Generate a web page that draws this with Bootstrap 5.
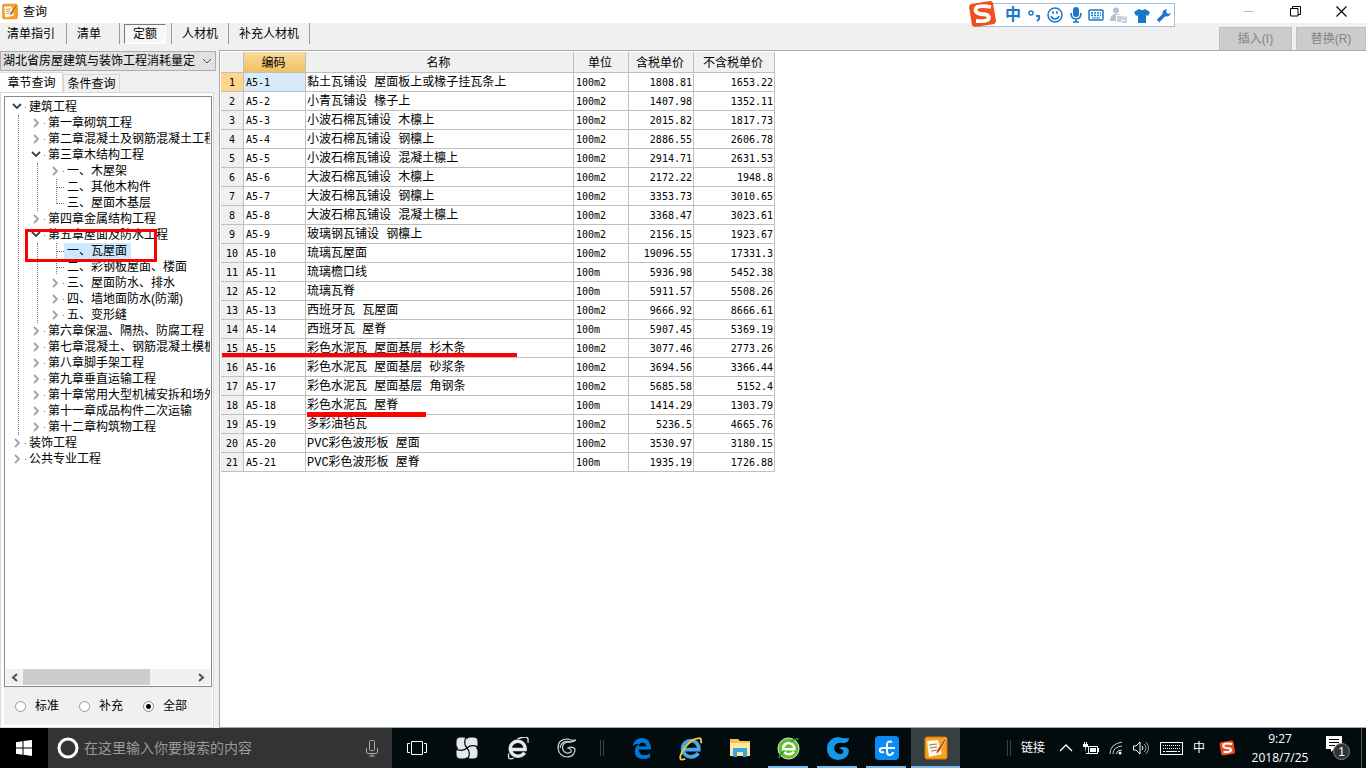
<!DOCTYPE html>
<html lang="zh-CN">
<head>
<meta charset="utf-8">
<meta name="viewport" content="width=device-width, initial-scale=1">
<title>查询</title>
<link href="https://cdn.jsdelivr.net/npm/bootstrap@5.3.0/dist/css/bootstrap.min.css" rel="stylesheet">
<style>
  :root { --face: #f0f0f0; --line: #a9a9b1; --grid: #c0c0c0; }
  body { font: 12px/16px "Liberation Sans", "Noto Sans CJK SC", sans-serif; color: #000; background: var(--face); overflow: hidden; }
  button, input, select { font: inherit; color: inherit; }
  button { border: 0; background: none; padding: 0; white-space: nowrap; }
  svg { display: block; flex: none; }
  ul { list-style: none; margin: 0; padding: 0; }

  .titlebar { height: 23px; background: #fff; padding-left: 2px; gap: 5px; }
  .win-btns { margin-right: 2px; }
  .win-btn { width: 46px; height: 23px; }
  .ime { right: 191px; top: 3px; height: 24px; width: 198px; border: 1px solid #a5bdd8; background: #fff; z-index: 5; padding-left: 24px; color: #1b78c8; }
  .ime-logo { left: -10px; top: -4px; }
  .ime-zh { font-size: 16px; font-weight: 700; line-height: 20px; }

  .toolbar { height: 27px; }
  .tool { height: 21px; padding: 1px 10px 0; line-height: 20px; border-right: 1px solid #999; }
  .tool-first { padding-left: 7px; padding-right: 11px; }
  .tool-wide { padding-right: 18px; }
  .pressed-cell { border-right: 1px solid #999; padding: 1px 5px 0 4px; height: 21px; }
  .pressed { width: 42px; height: 20px; border: 1px solid #fff; border-top-color: #777; border-left-color: #777; background: #f8f8f8; line-height: 19px; }
  .action { height: 24px; border: 1px solid #bfbfbf; background: #ccc; color: #838383; }
  .insert { width: 73px; }
  .replace { width: 70px; }

  .side { width: 219px; padding-top: 1px; }
  .quota { width: 216px; height: 20px; border: 1px solid #adadad; background: #e1e1e1; border-radius: 0; padding: 0 20px 0 2px; appearance: none; }
  .combo-arrow { right: 7px; top: 7px; pointer-events: none; }
  .tabs { margin-top: 1px; height: 20px; }
  .tab { border: 1px solid #d9d9d9; border-bottom: 0; height: 18px; width: 57px; line-height: 18px; background: var(--face); }
  .tab.active { width: 63px; height: 20px; background: #fff; border-left-color: #fff; }
  .pane { width: 214px; border: 1px solid #d9d9d9; background: #fff; padding: 3px 1px 2px 3px; }
  .tree { border: 1px solid #828790; background: #fff; padding: 2px 1px 1px; }
  .tree-view { overflow: hidden; white-space: nowrap; }
  .node { height: 16px; padding-left: 5px; }
  .node svg { width: 18px; height: 16px; }
  .node a { color: #000; text-decoration: none; line-height: 16px; }
  .node a.chosen { background: #cce8ff; padding: 0 4px 0 3px; margin-left: -3px; }
  .kids { margin-left: 12px; border-left: 1px dotted #777; padding-left: 6px; }
  .mark-box { left: -19px; top: -14px; width: 132px; height: 33px; border: 3px solid #f00; pointer-events: none; z-index: 2; }
  .hbar { height: 16px; background: var(--face); }
  .hbar button { width: 17px; height: 16px; }
  .thumb { width: 127px; background: #cdcdcd; }
  .scope { height: 38px; background: var(--face); }
  .scope label { width: 64px; }
  .scope input { appearance: none; width: 11px; height: 11px; border: 1px solid #999; border-radius: 50%; background: #fff; margin: 0 9px 0 11px; }
  .scope input:checked { border-color: #888; background: radial-gradient(circle, #000 0 2px, #fff 3px); }

  .results { border: 1px solid var(--line); border-right: 0; background: #fff; padding: 1px 0 0 1px; }
  .grid-table { width: 554px; table-layout: fixed; border-collapse: separate; border-spacing: 0; }
  .grid-table th, .grid-table td { border-right: 1px solid var(--grid); border-bottom: 1px solid var(--grid); height: 19px; padding: 2px 1px 0; line-height: 16px; white-space: nowrap; font-weight: 400; }
  .grid-table td { font-family: "DejaVu Sans Mono", "Noto Sans CJK SC", monospace; font-size: 10px; padding-left: 2px; }
  .grid-table td:nth-child(3) { font-family: "Liberation Mono", "Noto Sans CJK SC", monospace; font-size: 12px; padding-left: 1px; }
  .grid-table td:nth-child(n+5) { text-align: right; }
  .grid-table th { background: var(--face); text-align: center; }
  .grid-table thead th { height: 21px; line-height: 18px; padding-right: 3px; }
  .grid-table tbody th { font-family: "DejaVu Sans Mono", monospace; font-size: 10px; }
  .grid-table thead .sorted { background: linear-gradient(#f9d99f, #f1c15f); }
  .grid-table tbody .current { background: #ffd58d; }
  .grid-table .cell-on { background: #d9eaf9; }
  .c-no { width: 23px; } .c-code { width: 62px; } .c-name { width: 268px; } .c-unit { width: 55px; } .c-tax { width: 65px; } .c-net { width: 81px; }
  .stroke { background: #f00; z-index: 2; pointer-events: none; }
  .stroke-row { left: 1px; top: 14px; width: 295px; height: 4px; }
  .stroke-name { left: 1px; top: 16px; width: 119px; height: 5px; }

  .taskbar { height: 40px; background: #020b0e; color: #fff; }
  .start { width: 48px; background: #000; }
  .search { width: 344px; background: #333; padding: 0 12px 0 8px; gap: 4px; }
  .search input { background: none; border: 0; outline: 0; font-size: 14px; min-width: 0; padding: 0; }
  .search input::placeholder { color: #9a9a9a; opacity: 1; }
  .app { width: 49px; height: 40px; position: relative; }
  .app.running::after { content: ""; position: absolute; left: 4px; right: 5px; bottom: 0; height: 2px; background: #76b9ed; }
  .app.front { background: #364043; }
  .app.front::after { left: 0; right: 0; }
  .quick { width: 50px; height: 40px; }
  .bars { width: 4px; height: 16px; border: solid #3b4346; border-width: 0 1px; }
  .bars-mid { margin: 0 13px 0 8px; }
  .tray { gap: 10px; }
  .clock { line-height: 19px; width: 62px; font-family: "Open Sans", "Noto Sans CJK SC", sans-serif; }
  .notice { width: 26px; }
  .peek { width: 5px; border-left: 1px solid #555; }
</style>
</head>
<body class="vh-100 d-flex flex-column">

<!-- shared glyphs -->
<svg width="0" height="0" class="position-absolute" aria-hidden="true">
  <symbol id="open" viewBox="0 0 18 16"><path d="M2 5l4 4 4-4" fill="none" stroke="#404040" stroke-width="1.800"/><path d="M14 8h1v1h-1z" fill="#777"/></symbol>
  <symbol id="shut" viewBox="0 0 18 16"><path d="M4 4l4 4-4 4" fill="none" stroke="#a3a3a3" stroke-width="1.800"/><path d="M14 8h1v1h-1z" fill="#777"/></symbol>
  <symbol id="leaf" viewBox="0 0 18 16"><path d="M7.500 0v16M8 8.500H16" fill="none" stroke="#777" stroke-dasharray="1 1"/></symbol>
  <symbol id="leaf-end" viewBox="0 0 18 16"><path d="M7.500 0v9M8 8.500H16" fill="none" stroke="#777" stroke-dasharray="1 1"/></symbol>
  <symbol id="pad" viewBox="0 0 24 24">
    <rect x="1" y="1" width="22" height="22" rx="2" fill="#f8a11b" stroke="#d9770d"/>
    <path d="M3 5l11-1 4 14-13 3z" fill="#fff8e6"/><path d="M5 9l8-1M6 12l7-1M7 15l7-1" stroke="#a8783f"/>
    <path d="M21 2l-8 12-1 4 3-2 7-12z" fill="#b5460c" stroke="#fff" stroke-width=".5"/>
  </symbol>
  <symbol id="sogou" viewBox="0 0 28 28">
    <path d="M3 4L22 1q2 0 3 2l3 18q0 2-2 3L7 27q-2 0-3-2L1 7q0-2 2-3z" fill="#f04e1c"/>
    <path d="M23 7Q11 5 8 8q-2 5 5 6 8 0 8 4-1 4-13 3" fill="none" stroke="#fff" stroke-width="3.800"/>
  </symbol>
  <symbol id="ie" viewBox="0 0 24 24">
    <path d="M19.500 16.500Q17 20 12.500 20A7.800 7.800 0 1 1 20 13H6" fill="none" stroke="currentColor" stroke-width="3.600"/>
  </symbol>
</svg>

<header class="titlebar d-flex align-items-center position-relative flex-shrink-0">
  <svg width="16" height="17"><use href="#pad"/></svg>
  <span>查询</span>
  <div class="ime position-absolute d-flex align-items-center justify-content-around">
    <svg class="ime-logo position-absolute" width="28" height="28"><use href="#sogou"/></svg>
    <span class="ime-zh">中</span>
    <svg width="14" height="16"><circle cx="4" cy="6" r="2" fill="none" stroke="#1b78c8" stroke-width="1.500"/><path d="M9 9h3q1 3-2 5" fill="none" stroke="#1b78c8" stroke-width="2"/></svg>
    <svg width="16" height="16" fill="none" stroke="#1b78c8" stroke-width="1.500"><circle cx="8" cy="8" r="7"/><path d="M4 9q1 3 4 3t4-3M6 4v3M10 4v3"/></svg>
    <svg width="14" height="16"><rect x="4" y="0" width="6" height="10" rx="3" fill="#1b78c8"/><path d="M2 6q0 6 5 6t5-6M7 12v3M4 15h6" fill="none" stroke="#1b78c8" stroke-width="1.600"/></svg>
    <svg width="16" height="12"><rect x="1" y="1" width="14" height="10" rx="1" fill="#fff" stroke="#1b78c8" stroke-width="1.500"/><path d="M3 4h10M3 6.500h10" stroke="#1b78c8" stroke-width="1.400" stroke-dasharray="2 1"/><path d="M4 9h8" stroke="#1b78c8"/></svg>
    <svg width="18" height="16" fill="#b4bfd3"><circle cx="6" cy="3.500" r="3"/><path d="M0 14q0-7 6-7 4 0 5 1H6v6z"/><path d="M7 10h4v2H8v2h4M13 9v3h3V9M16 10v5h-4" fill="none" stroke="#b4bfd3" stroke-width="1.300"/></svg>
    <svg width="16" height="15" fill="#1b78c8"><path d="M5 1q3 2 6 0l5 3-2 4-2-1v8H4V7L2 8 0 4z"/></svg>
    <svg width="15" height="15"><path d="M2 13l6-6" stroke="#1b78c8" stroke-width="3.500"/><path d="M11 1Q5 2 7 7q5 4 8-2l-3 1-2-2z" fill="#1b78c8"/></svg>
  </div>
  <div class="win-btns d-flex ms-auto">
    <button class="win-btn" aria-label="最小化"><svg class="mx-auto" width="10" height="11"><path d="M0 5.500h10" stroke="#bbb"/></svg></button>
    <button class="win-btn" aria-label="还原"><svg class="mx-auto" width="11" height="11" fill="none" stroke="#000"><path d="M.5 2.500h7.500v7.500H.5zM2.500 2.500v-2h8v8H8"/></svg></button>
    <button class="win-btn" aria-label="关闭"><svg class="mx-auto" width="11" height="11"><path d="M.5.5l10 10M10.500.5l-10 10" stroke="#000" stroke-width="1.200"/></svg></button>
  </div>
</header>

<nav class="toolbar d-flex flex-shrink-0 align-items-start">
  <button class="tool tool-first">清单指引</button>
  <button class="tool tool-wide">清单</button>
  <div class="pressed-cell"><button class="pressed">定额</button></div>
  <button class="tool">人材机</button>
  <button class="tool">补充人材机</button>
  <div class="ms-auto d-flex gap-1 pt-1">
    <button class="action insert" disabled>插入(I)</button>
    <button class="action replace" disabled>替换(R)</button>
  </div>
</nav>

<main class="d-flex flex-fill overflow-hidden">
  <aside class="side d-flex flex-column flex-shrink-0">
    <div class="position-relative">
      <select class="quota d-block" aria-label="定额库"><option>湖北省房屋建筑与装饰工程消耗量定</option></select>
      <svg class="combo-arrow position-absolute" width="10" height="7"><path d="M1 1l4 4 4-4" fill="none" stroke="#555"/></svg>
    </div>
    <div class="tabs d-flex align-items-end">
      <button class="tab active">章节查询</button><button class="tab">条件查询</button>
    </div>
    <div class="pane d-flex flex-column flex-fill overflow-hidden">
      <div class="tree d-flex flex-column flex-fill overflow-hidden">
        <div class="tree-view flex-fill">
          <ul>
            <li><div class="node d-flex"><svg><use href="#open"/></svg><a href="#">建筑工程</a></div>
              <ul class="kids">
                <li><div class="node d-flex"><svg><use href="#shut"/></svg><a href="#">第一章砌筑工程</a></div></li>
                <li><div class="node d-flex"><svg><use href="#shut"/></svg><a href="#">第二章混凝土及钢筋混凝土工程</a></div></li>
                <li><div class="node d-flex"><svg><use href="#open"/></svg><a href="#">第三章木结构工程</a></div>
                  <ul class="kids">
                    <li><div class="node d-flex"><svg><use href="#shut"/></svg><a href="#">一、木屋架</a></div></li>
                    <li><div class="node d-flex"><svg><use href="#leaf"/></svg><a href="#">二、其他木构件</a></div></li>
                    <li><div class="node d-flex"><svg><use href="#leaf-end"/></svg><a href="#">三、屋面木基层</a></div></li>
                  </ul></li>
                <li><div class="node d-flex"><svg><use href="#shut"/></svg><a href="#">第四章金属结构工程</a></div></li>
                <li><div class="node d-flex"><svg><use href="#open"/></svg><a href="#">第五章屋面及防水工程</a></div>
                  <ul class="kids">
                    <li class="position-relative"><div class="node d-flex"><svg><use href="#leaf"/></svg><a href="#" class="chosen">一、瓦屋面</a></div><div class="mark-box position-absolute"></div></li>
                    <li><div class="node d-flex"><svg><use href="#leaf"/></svg><a href="#">二、彩钢板屋面、楼面</a></div></li>
                    <li><div class="node d-flex"><svg><use href="#shut"/></svg><a href="#">三、屋面防水、排水</a></div></li>
                    <li><div class="node d-flex"><svg><use href="#shut"/></svg><a href="#">四、墙地面防水(防潮)</a></div></li>
                    <li><div class="node d-flex"><svg><use href="#shut"/></svg><a href="#">五、变形缝</a></div></li>
                  </ul></li>
                <li><div class="node d-flex"><svg><use href="#shut"/></svg><a href="#">第六章保温、隔热、防腐工程</a></div></li>
                <li><div class="node d-flex"><svg><use href="#shut"/></svg><a href="#">第七章混凝土、钢筋混凝土模板</a></div></li>
                <li><div class="node d-flex"><svg><use href="#shut"/></svg><a href="#">第八章脚手架工程</a></div></li>
                <li><div class="node d-flex"><svg><use href="#shut"/></svg><a href="#">第九章垂直运输工程</a></div></li>
                <li><div class="node d-flex"><svg><use href="#shut"/></svg><a href="#">第十章常用大型机械安拆和场外</a></div></li>
                <li><div class="node d-flex"><svg><use href="#shut"/></svg><a href="#">第十一章成品构件二次运输</a></div></li>
                <li><div class="node d-flex"><svg><use href="#shut"/></svg><a href="#">第十二章构筑物工程</a></div></li>
              </ul></li>
            <li><div class="node d-flex"><svg><use href="#shut"/></svg><a href="#">装饰工程</a></div></li>
            <li><div class="node d-flex"><svg><use href="#shut"/></svg><a href="#">公共专业工程</a></div></li>
          </ul>
        </div>
        <div class="hbar d-flex">
          <button aria-label="向左"><svg class="mx-auto" width="7" height="9"><path d="M6 1L2 4.500 6 8" fill="none" stroke="#505050" stroke-width="2"/></svg></button>
          <div class="thumb"></div>
          <button class="ms-auto" aria-label="向右"><svg class="mx-auto" width="7" height="9"><path d="M1 1l4 3.500L1 8" fill="none" stroke="#505050" stroke-width="2"/></svg></button>
        </div>
      </div>
      <div class="scope d-flex align-items-center">
        <label class="d-flex align-items-center"><input type="radio" name="scope">标准</label>
        <label class="d-flex align-items-center"><input type="radio" name="scope">补充</label>
        <label class="d-flex align-items-center"><input type="radio" name="scope" checked>全部</label>
      </div>
    </div>
  </aside>

  <section class="results flex-fill overflow-hidden">
    <table class="grid-table">
      <colgroup><col class="c-no"><col class="c-code"><col class="c-name"><col class="c-unit"><col class="c-tax"><col class="c-net"></colgroup>
      <thead><tr><th></th><th class="sorted">编码</th><th>名称</th><th>单位</th><th>含税单价</th><th>不含税单价</th></tr></thead>
      <tbody>
        <tr><th class="current">1</th><td class="cell-on">A5-1</td><td>黏土瓦铺设 屋面板上或椽子挂瓦条上</td><td>100m2</td><td>1808.81</td><td>1653.22</td></tr>
        <tr><th>2</th><td>A5-2</td><td>小青瓦铺设 椽子上</td><td>100m2</td><td>1407.98</td><td>1352.11</td></tr>
        <tr><th>3</th><td>A5-3</td><td>小波石棉瓦铺设 木檩上</td><td>100m2</td><td>2015.82</td><td>1817.73</td></tr>
        <tr><th>4</th><td>A5-4</td><td>小波石棉瓦铺设 钢檩上</td><td>100m2</td><td>2886.55</td><td>2606.78</td></tr>
        <tr><th>5</th><td>A5-5</td><td>小波石棉瓦铺设 混凝土檩上</td><td>100m2</td><td>2914.71</td><td>2631.53</td></tr>
        <tr><th>6</th><td>A5-6</td><td>大波石棉瓦铺设 木檩上</td><td>100m2</td><td>2172.22</td><td>1948.8</td></tr>
        <tr><th>7</th><td>A5-7</td><td>大波石棉瓦铺设 钢檩上</td><td>100m2</td><td>3353.73</td><td>3010.65</td></tr>
        <tr><th>8</th><td>A5-8</td><td>大波石棉瓦铺设 混凝土檩上</td><td>100m2</td><td>3368.47</td><td>3023.61</td></tr>
        <tr><th>9</th><td>A5-9</td><td>玻璃钢瓦铺设 钢檩上</td><td>100m2</td><td>2156.15</td><td>1923.67</td></tr>
        <tr><th>10</th><td>A5-10</td><td>琉璃瓦屋面</td><td>100m2</td><td>19096.55</td><td>17331.3</td></tr>
        <tr><th>11</th><td>A5-11</td><td>琉璃檐口线</td><td>100m</td><td>5936.98</td><td>5452.38</td></tr>
        <tr><th>12</th><td>A5-12</td><td>琉璃瓦脊</td><td>100m</td><td>5911.57</td><td>5508.26</td></tr>
        <tr><th>13</th><td>A5-13</td><td>西班牙瓦 瓦屋面</td><td>100m2</td><td>9666.92</td><td>8666.61</td></tr>
        <tr><th>14</th><td>A5-14</td><td>西班牙瓦 屋脊</td><td>100m</td><td>5907.45</td><td>5369.19</td></tr>
        <tr><th class="position-relative">15<div class="stroke stroke-row position-absolute"></div></th><td>A5-15</td><td>彩色水泥瓦 屋面基层 杉木条</td><td>100m2</td><td>3077.46</td><td>2773.26</td></tr>
        <tr><th>16</th><td>A5-16</td><td>彩色水泥瓦 屋面基层 砂浆条</td><td>100m2</td><td>3694.56</td><td>3366.44</td></tr>
        <tr><th>17</th><td>A5-17</td><td>彩色水泥瓦 屋面基层 角钢条</td><td>100m2</td><td>5685.58</td><td>5152.4</td></tr>
        <tr><th>18</th><td>A5-18</td><td class="position-relative">彩色水泥瓦 屋脊<div class="stroke stroke-name position-absolute"></div></td><td>100m</td><td>1414.29</td><td>1303.79</td></tr>
        <tr><th>19</th><td>A5-19</td><td>多彩油毡瓦</td><td>100m2</td><td>5236.5</td><td>4665.76</td></tr>
        <tr><th>20</th><td>A5-20</td><td>PVC彩色波形板 屋面</td><td>100m2</td><td>3530.97</td><td>3180.15</td></tr>
        <tr><th>21</th><td>A5-21</td><td>PVC彩色波形板 屋脊</td><td>100m</td><td>1935.19</td><td>1726.88</td></tr>
      </tbody>
    </table>
  </section>
</main>

<footer class="taskbar d-flex align-items-stretch flex-shrink-0">
  <button class="start" aria-label="开始"><svg class="mx-auto" width="16" height="16" fill="#fff"><path d="M0 2.200L6.500 1.300V7.500H0zM7.500 1.100L16 0v7.500H7.500zM0 8.500h6.500v6.200L0 13.800zM7.500 8.500H16V16l-8.500-1.200z"/></svg></button>
  <div class="search d-flex align-items-center">
    <svg width="24" height="24"><circle cx="12" cy="12" r="9" fill="none" stroke="#fff" stroke-width="3"/></svg>
    <input class="flex-fill" type="text" placeholder="在这里输入你要搜索的内容" aria-label="搜索">
    <svg width="16" height="18" fill="none" stroke="#aaa"><rect x="5.500" y="1.500" width="5" height="10" rx="1"/><path d="M2.500 9v4q0 1.500 1.500 1.500h8q1.500 0 1.500-1.500V9M8 15v2M5 17h6"/></svg>
  </div>
  <button class="quick" aria-label="任务视图"><svg class="mx-auto" width="20" height="14" fill="none" stroke="#fff"><path d="M4.500.5h11v13h-11zM3 2.500H.5v9H3M17 2.500h2.500v9H17"/></svg></button>
  <button class="quick" aria-label="风扇"><svg class="mx-auto" width="22" height="22" viewBox="-11 -11 22 22" fill="#e6e9e9"><rect x="-10.500" y="-10.500" width="11" height="11" rx="4"/><rect x="-.5" y="-10.500" width="11" height="11" rx="4"/><rect x="-10.500" y="-.5" width="11" height="11" rx="4"/><rect x="-.5" y="-.5" width="11" height="11" rx="4"/><circle r="4"/><path d="M0 0Q-4 4-11 1M0 0Q-4-4-1-11M0 0Q4-4 11-1M0 0Q4 4 1 11" fill="none" stroke="#020b0e" stroke-width="1.200"/></svg></button>
  <button class="quick" aria-label="浏览器"><svg class="mx-auto" width="23" height="23" viewBox="0 0 24 24" color="#e6e9e9"><use href="#ie"/><path d="M8 22Q1 25 3 17M12 2q10-4 11 0v4" fill="none" stroke="#e6e9e9" stroke-width="1.400"/></svg></button>
  <button class="quick" aria-label="广联达"><svg class="mx-auto" width="20" height="20" fill="none" stroke="#d5d9d9" stroke-width="1.200"><path d="M19 2q-4 1-8-1Q1 1 1 10q1 9 10 9 7-1 7-8-3-3-7-1 4 1 3 4-5 3-8-2-2-6 4-8 5 1 9-2z"/><path d="M14 4Q5 1 3 10"/></svg></button>
  <div class="bars bars-mid align-self-center"></div>
  <button class="app" aria-label="Edge"><svg class="mx-auto" width="23" height="23" viewBox="0 0 24 24"><path d="M2 11Q4 1 13 1q9 1 9 12H9q1 6 6 6 4 0 6-2v4q-4 2-8 2-8-1-8-8 0-5 5-8-7 0-8 4zm7-1h8q0-4-4-4t-4 4z" fill="#0078d7"/></svg></button>
  <button class="app" aria-label="Internet Explorer"><svg class="mx-auto" width="25" height="25" viewBox="0 0 24 24" color="#49a9e6"><use href="#ie"/><path d="M7 22Q-1 25 4 15 12 2 21 2q2 1 1 5" fill="none" stroke="#f5cb35" stroke-width="1.800"/></svg></button>
  <button class="app" aria-label="文件资源管理器"><svg class="mx-auto" width="22" height="20"><path d="M1 1h8l2 2h10v15H1z" fill="#f6c64c"/><path d="M1 5h20v13H1z" fill="#fde7a1"/><path d="M4 19v-9h14v9h-4v-5H8v5z" fill="#35a7dd"/></svg></button>
  <button class="app running" aria-label="安全浏览器"><svg class="mx-auto" width="23" height="23" viewBox="0 0 24 24" color="#fff"><circle cx="12" cy="12" r="11" fill="#63bd2f" stroke="#dff3d3"/><g transform="translate(3 3)"><use href="#ie" width="18" height="18"/></g><path d="M2 22Q3 18 8 14M14 5q8-5 8-2" fill="none" stroke="#289c25" stroke-width="1.500"/></svg></button>
  <button class="app running" aria-label="广联达 G"><svg class="mx-auto" width="24" height="24"><path d="M23 2q0 5-6 5-8-1-9 5 1 6 7 6 3-1 2-4l-4-2q7-3 10 2 0 9-11 10Q1 23 1 12 2 2 12 1q7 2 11 1z" fill="#1698e9"/></svg></button>
  <button class="app running" aria-label="计价软件"><svg class="mx-auto" width="24" height="24"><rect width="24" height="24" rx="4" fill="#0b8cf5"/><path d="M17 6q-5-2-5 3v7q0 3 3 3 3-1 3-3M20 12H8q-4 0-3 3 1 2 4 1" fill="none" stroke="#fff" stroke-width="2"/></svg></button>
  <button class="app running front" aria-label="查询"><svg class="mx-auto" width="24" height="24"><use href="#pad"/></svg></button>

  <div class="tray d-flex align-items-center ms-auto">
    <div class="bars"></div>
    <span>链接</span>
    <svg width="14" height="8" class="ms-1"><path d="M1 7l6-6 6 6" fill="none" stroke="#fff" stroke-width="1.300"/></svg>
    <svg width="16" height="13"><path d="M5.500 4.500h9v7h-9z" fill="none" stroke="#fff"/><path d="M7 6h6v4H7zM15 6h1v4h-1zM0 2h5v3H0zM1 0h1v2H1zM3 0h1v2H3zM2 5h1v7h3v-1H3z" fill="#fff"/></svg>
    <svg width="14" height="14" fill="none" stroke="#ccc"><path d="M1 13Q1 3 13 1M4 13q0-7 9-8M7 13q1-4 6-4"/><circle cx="11" cy="12" r="1.500" fill="#fff" stroke="none"/></svg>
    <svg width="17" height="14" fill="none" stroke="#fff"><path d="M.5 5v4H3l4 4V1L3 5zM9 5q2 2 0 4"/><path d="M11 3q4 4 0 8M13 1q5 6 0 12" stroke="#999"/></svg>
    <svg width="23" height="13"><rect x=".5" y=".5" width="22" height="12" fill="none" stroke="#fff"/><path d="M3 3.500h17M3 6.500h17" stroke="#fff" stroke-dasharray="1 1"/><path d="M3 9.500h2M6 9.500h11M18 9.500h2" stroke="#fff"/></svg>
    <span>中</span>
    <svg width="16" height="16" class="ms-1"><use href="#sogou"/></svg>
    <div class="clock text-center ms-1">9:27<br>2018/7/25</div>
    <button class="notice ms-1" aria-label="通知"><svg width="26" height="26"><path d="M1 1h16v13H9l-3 3v-3H1z" fill="#fff"/><path d="M4 4.500h10M4 7.500h10M4 10.500h6" stroke="#000"/><circle cx="16.500" cy="16.500" r="8" fill="#333" stroke="#888"/><text x="16.500" y="21" fill="#fff" font-size="12" text-anchor="middle">1</text></svg></button>
    <div class="peek align-self-stretch"></div>
  </div>
</footer>
<script src="https://cdn.jsdelivr.net/npm/bootstrap@5.3.0/dist/js/bootstrap.bundle.min.js"></script>
</body>
</html>
